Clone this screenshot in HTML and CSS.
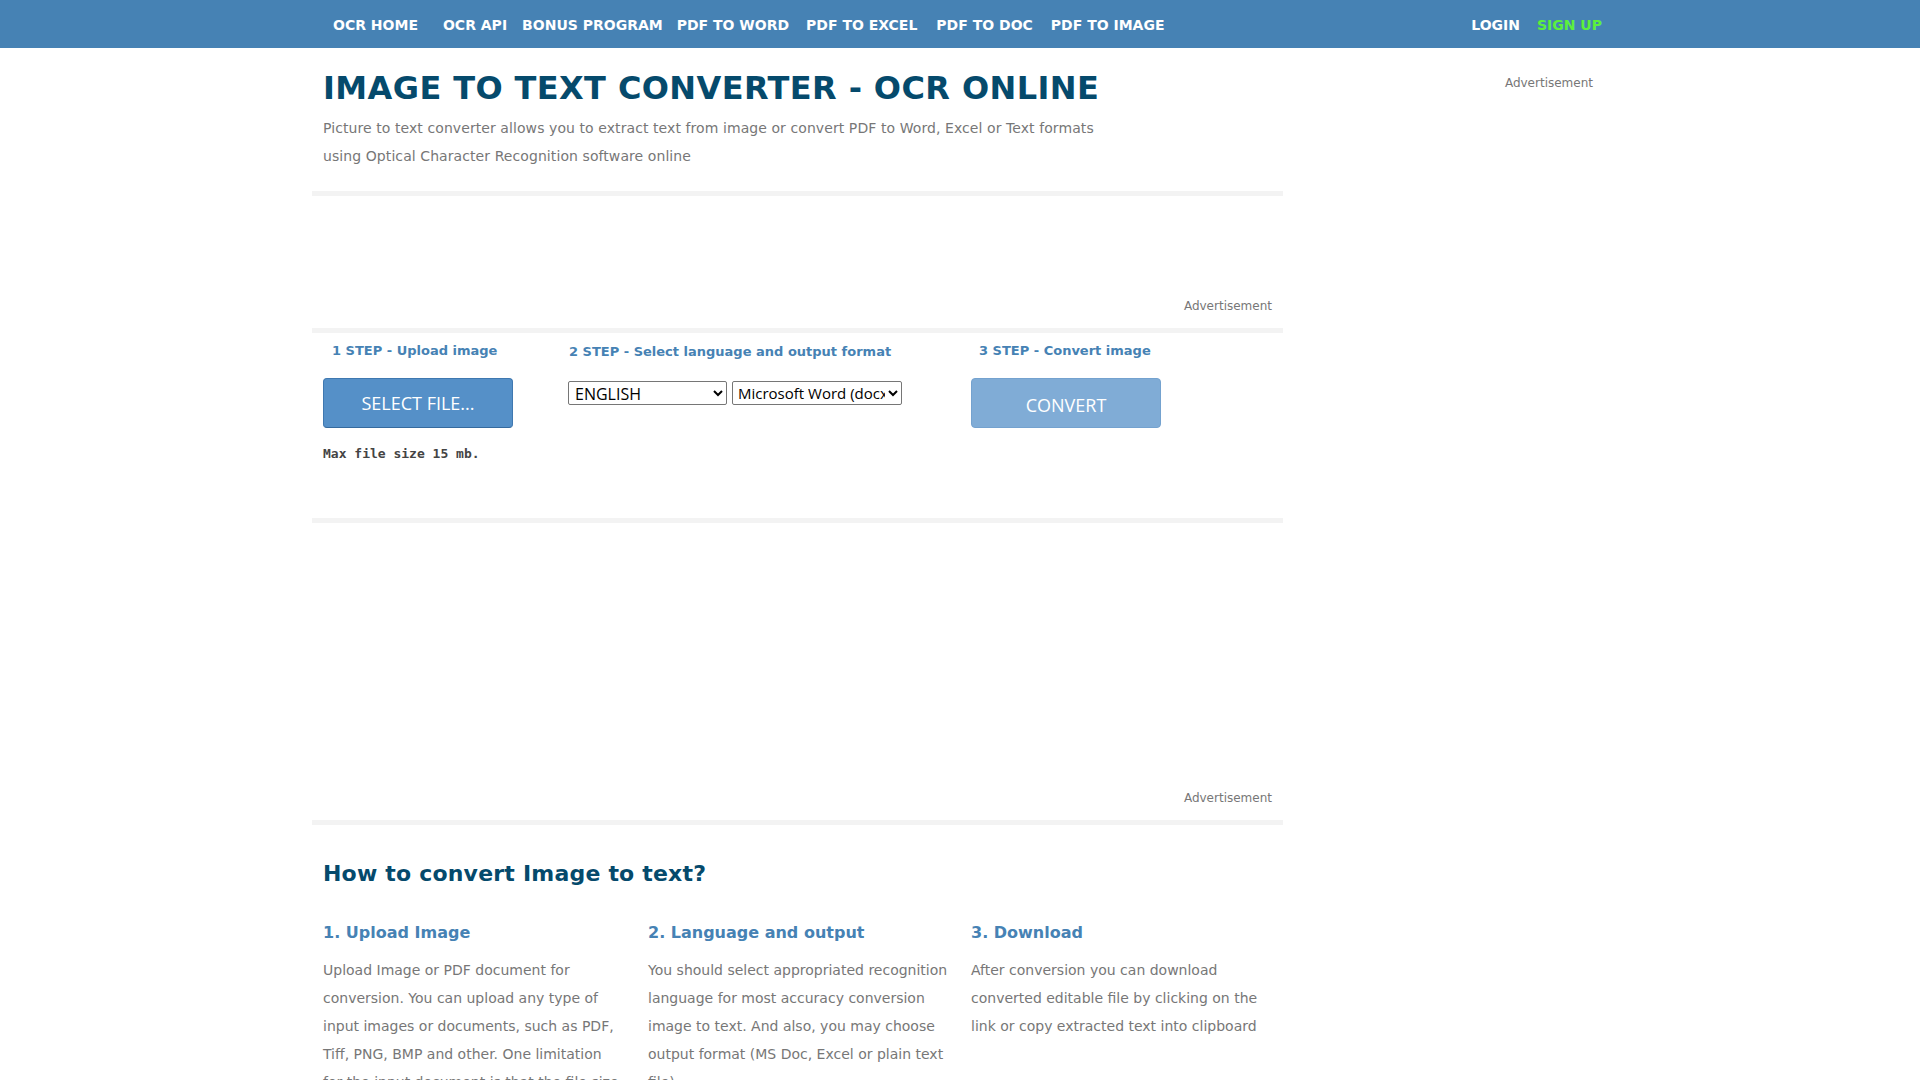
FILE: index.html
```html
<!DOCTYPE html>
<html lang="en">
<head>
<meta charset="utf-8">
<title>Image to Text Converter - OCR Online</title>
<link rel="stylesheet" href="styles.css">
</head>
<body>
<nav class="topbar">
  <div class="topbar-inner">
    <div class="nav-left">
      <a class="nav-link nav-home" href="#">OCR HOME</a>
      <a class="nav-link" href="#">OCR API</a>
      <a class="nav-link" href="#">BONUS PROGRAM</a>
      <a class="nav-link nav-word" href="#">PDF TO WORD</a>
      <a class="nav-link nav-excel" href="#">PDF TO EXCEL</a>
      <a class="nav-link nav-doc" href="#">PDF TO DOC</a>
      <a class="nav-link nav-image" href="#">PDF TO IMAGE</a>
    </div>
    <div class="nav-right">
      <a class="nav-link" href="#">LOGIN</a>
      <a class="nav-link nav-signup" href="#">SIGN UP</a>
    </div>
  </div>
</nav>

<div class="page">
  <main class="content">
    <header class="intro">
      <h1 class="title">IMAGE TO TEXT CONVERTER - OCR ONLINE</h1>
      <p class="lead">Picture to text converter allows you to extract text from image or convert PDF to Word, Excel or Text formats using Optical Character Recognition software online</p>
    </header>

    <section class="ad ad-small">
      <span class="ad-label">Advertisement</span>
    </section>

    <section class="steps">
      <div class="step step-one">
        <div class="step-label">1 STEP - Upload image</div>
        <button class="btn btn-primary" type="button">SELECT FILE...</button>
        <div class="max-size">Max file size 15 mb.</div>
      </div>
      <div class="step step-two">
        <div class="step-label">2 STEP - Select language and output format</div>
        <div class="selects">
          <select class="sel sel-lang">
            <option>ENGLISH</option>
            <option>FRENCH</option>
            <option>GERMAN</option>
            <option>SPANISH</option>
          </select>
          <select class="sel sel-format">
            <option>Microsoft Word (docx)</option>
            <option>Microsoft Excel (xlsx)</option>
            <option>Text Plain (txt)</option>
          </select>
        </div>
      </div>
      <div class="step step-three">
        <div class="step-label">3 STEP - Convert image</div>
        <button class="btn btn-disabled" type="button">CONVERT</button>
      </div>
    </section>

    <section class="ad ad-large">
      <span class="ad-label">Advertisement</span>
    </section>

    <section class="howto">
      <h2 class="howto-title">How to convert Image to text?</h2>
      <div class="howto-grid">
        <div class="howto-col">
          <h3 class="howto-head">1. Upload Image</h3>
          <p class="howto-text">Upload Image or PDF document for conversion. You can upload any type of input images or documents, such as PDF, Tiff, PNG, BMP and other. One limitation for the input document is that the file size should not exceed 15 mb.</p>
        </div>
        <div class="howto-col">
          <h3 class="howto-head">2. Language and output</h3>
          <p class="howto-text">You should select appropriated recognition language for most accuracy conversion image to text. And also, you may choose output format (MS Doc, Excel or plain text file).</p>
        </div>
        <div class="howto-col">
          <h3 class="howto-head">3. Download</h3>
          <p class="howto-text">After conversion you can download converted editable file by clicking on the link or copy extracted text into clipboard</p>
        </div>
      </div>
    </section>
  </main>

  <aside class="sidebar">
    <span class="ad-label">Advertisement</span>
  </aside>
</div>
</body>
</html>
```

FILE: styles.css
```css
* {
  box-sizing: border-box;
}

html, body {
  margin: 0;
  padding: 0;
  background: #ffffff;
}

body {
  font-family: "DejaVu Sans", Verdana, sans-serif;
  color: #333333;
}

/* ---------- top navigation ---------- */
.topbar {
  background: #4682b4;
  height: 48px;
}

.topbar-inner {
  width: 1300px;
  margin: 0 auto;
  height: 48px;
  display: flex;
  justify-content: space-between;
  align-items: center;
  padding: 2px 8px 0 23px;
}

.nav-left,
.nav-right {
  display: flex;
  align-items: center;
  gap: 15px;
}

.nav-right {
  gap: 17px;
}

.nav-link {
  color: #ffffff;
  text-decoration: none;
  font-weight: bold;
  font-size: 14px;
  line-height: 46px;
  white-space: nowrap;
}

.nav-home {
  margin-right: 10px;
}

.nav-word {
  margin-left: -1px;
}

.nav-excel {
  margin-left: 2px;
}

.nav-doc {
  margin-left: 4px;
}

.nav-image {
  margin-left: 3px;
}

.nav-signup {
  color: #5cf03c;
}

/* ---------- page layout ---------- */
.page {
  width: 1300px;
  margin: 0 auto;
  display: flex;
  align-items: flex-start;
}

.content {
  width: 971px;
  margin-left: 2px;
  flex: none;
}

.sidebar {
  flex: 1;
  text-align: right;
  padding: 24px 17px 0 0;
}

/* ---------- intro ---------- */
.intro {
  padding: 22px 11px 21px;
}

.title {
  margin: 0;
  font-size: 32px;
  font-weight: bold;
  color: #054a6c;
  line-height: 37px;
  letter-spacing: 0.4px;
  white-space: nowrap;
}

.lead {
  margin: 7px 0 0;
  max-width: 790px;
  font-size: 14px;
  line-height: 28px;
  letter-spacing: 0.08px;
  color: #777777;
}

/* ---------- ad placeholders ---------- */
.ad {
  border-top: 5px solid #f3f3f3;
  display: flex;
  justify-content: flex-end;
  align-items: flex-end;
  padding: 0 11px;
}

.ad-small {
  height: 137px;
  padding-bottom: 15px;
}

.ad-large {
  height: 302px;
  padding-bottom: 15px;
}

.ad-label {
  font-size: 12px;
  line-height: 14px;
  color: #777777;
}

/* ---------- steps ---------- */
.steps {
  border-top: 5px solid #f3f3f3;
  height: 190px;
  display: grid;
  grid-template-columns: 245px 403px 1fr;
  padding: 10px 0 0 11px;
}

.step-label {
  font-size: 13px;
  font-weight: bold;
  line-height: 16px;
  color: #4682b4;
  padding-left: 9px;
  white-space: nowrap;
}

.step-two .step-label {
  padding-left: 1px;
  margin-top: 1px;
}

.step-three .step-label {
  padding-left: 8px;
}

.btn {
  display: block;
  width: 190px;
  height: 50px;
  margin-top: 19px;
  border-radius: 4px;
  font-family: "Open Sans", "Noto Sans", sans-serif;
  font-size: 18px;
  color: #ffffff;
  letter-spacing: 0;
  cursor: pointer;
}

.btn-primary {
  background: #5590c8;
  border: 1px solid #3f78b0;
  border-bottom-color: #356a9e;
}

.btn-disabled {
  background: #80acd6;
  border: 1px solid #74a2cf;
  padding-top: 4px;
  cursor: default;
}

.max-size {
  margin-top: 18px;
  font-family: "DejaVu Sans Mono", "Liberation Mono", monospace;
  font-weight: bold;
  font-size: 13px;
  line-height: 16px;
  color: #444444;
}

.selects {
  display: flex;
  gap: 5px;
  margin-top: 21px;
}

.sel {
  height: 24px;
  font-family: "Open Sans", "Noto Sans", sans-serif;
  font-size: 16px;
  color: #000000;
  background: #ffffff;
  border: 1px solid #767676;
  border-radius: 2px;
  padding: 0 0 0 2px;
}

.sel-lang {
  width: 159px;
}

.sel-format {
  width: 170px;
  font-size: 15px;
  padding-left: 1px;
}

/* ---------- how to ---------- */
.howto {
  border-top: 5px solid #f3f3f3;
  padding: 36px 0 0 11px;
}

.howto-title {
  margin: 0;
  font-size: 22px;
  font-weight: bold;
  line-height: 26px;
  letter-spacing: 0.2px;
  color: #054a6c;
}

.howto-grid {
  display: grid;
  grid-template-columns: 310px 308px 302px;
  column-gap: 15px;
  margin-top: 36px;
}

.howto-col:nth-child(1) {
  padding-right: 8px;
}

.howto-col:nth-child(2) {
  padding-right: 6px;
}

.howto-head {
  margin: 0;
  font-size: 16px;
  font-weight: bold;
  line-height: 19px;
  color: #4682b4;
}

.howto-text {
  margin: 14px 0 0;
  font-size: 14px;
  line-height: 28px;
  color: #777777;
}
```
